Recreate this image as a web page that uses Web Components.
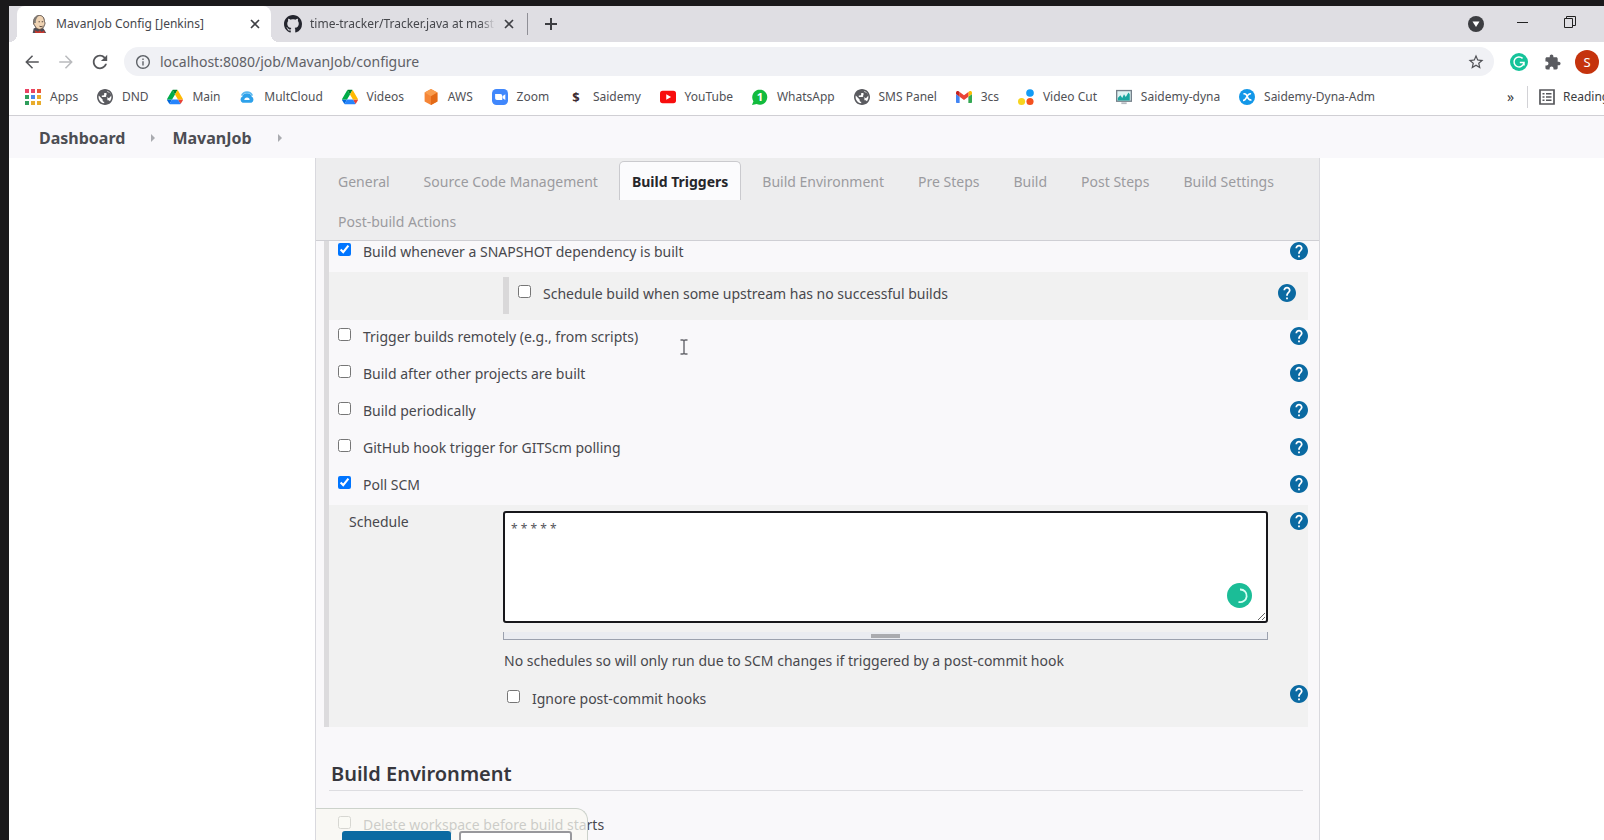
<!DOCTYPE html>
<html lang="en">
<head>
<meta charset="utf-8">
<title>MavanJob Config [Jenkins]</title>
<style>
  html, body { height: 100%; margin: 0; overflow: hidden; }
  body {
    box-sizing: border-box;
    padding: 6px 0 0 9px;
    background: #1a191b;
    font-family: "Noto Sans", "Open Sans", sans-serif;
    font-size: 14px;
    line-height: 20px;
    color: #48484d;
  }
</style>
</head>
<body>
<browser-window>
  <browser-tab slot="tab" icon="jenkins" active>MavanJob Config [Jenkins]</browser-tab>
  <browser-tab slot="tab" icon="github">time-tracker/Tracker.java at master</browser-tab>

  <book-mark slot="bookmark" icon="apps">Apps</book-mark>
  <book-mark slot="bookmark" icon="globe">DND</book-mark>
  <book-mark slot="bookmark" icon="drive">Main</book-mark>
  <book-mark slot="bookmark" icon="cloud">MultCloud</book-mark>
  <book-mark slot="bookmark" icon="drive">Videos</book-mark>
  <book-mark slot="bookmark" icon="aws">AWS</book-mark>
  <book-mark slot="bookmark" icon="zoom">Zoom</book-mark>
  <book-mark slot="bookmark" icon="dollar">Saidemy</book-mark>
  <book-mark slot="bookmark" icon="youtube">YouTube</book-mark>
  <book-mark slot="bookmark" icon="whatsapp">WhatsApp</book-mark>
  <book-mark slot="bookmark" icon="globe">SMS Panel</book-mark>
  <book-mark slot="bookmark" icon="gmail">3cs</book-mark>
  <book-mark slot="bookmark" icon="dots">Video Cut</book-mark>
  <book-mark slot="bookmark" icon="monitor">Saidemy-dyna</book-mark>
  <book-mark slot="bookmark" icon="joomla">Saidemy-Dyna-Adm</book-mark>

  <bread-crumbs><a href="#dashboard">Dashboard</a><a href="#job">MavanJob</a></bread-crumbs>
  <config-page>
    <config-tabs slot="tabs">
      <a href="#general">General</a>
      <a href="#scm">Source Code Management</a>
      <a href="#triggers" aria-current="true">Build Triggers</a>
      <a href="#environment">Build Environment</a>
      <a href="#pre">Pre Steps</a>
      <a href="#build">Build</a>
      <a href="#post">Post Steps</a>
      <a href="#settings">Build Settings</a>
      <a href="#actions">Post-build Actions</a>
    </config-tabs>
    <option-group>
      <option-row checked under-tabs>Build whenever a SNAPSHOT dependency is built</option-row>
      <nested-option><option-row>Schedule build when some upstream has no successful builds</option-row></nested-option>
      <option-row>Trigger builds remotely (e.g., from scripts)</option-row>
      <option-row>Build after other projects are built</option-row>
      <option-row>Build periodically</option-row>
      <option-row>GitHub hook trigger for GITScm polling</option-row>
      <option-row checked>Poll SCM</option-row>
      <schedule-panel value="* * * * *">
        <span slot="status">No schedules so will only run due to SCM changes if triggered by a post-commit hook</span>
        <option-row slot="extra" compact>Ignore post-commit hooks</option-row>
      </schedule-panel>
    </option-group>
    <config-section heading="Build Environment">
      <option-row no-help>Delete workspace before build starts</option-row>
    </config-section>
    <save-bar slot="footer"></save-bar>
  </config-page>
</browser-window>

<script>
const svg = (box, body) => `<svg viewBox="${box}" aria-hidden="true">${body}</svg>`;
const dotGrid = ['#ea4364', '#ea4364', '#e8553c', '#2f9e5b', '#4a86e8', '#e9ac2c', '#2f9e5b', '#e9ac2c', '#e9ac2c']
  .map((c, i) => `<rect x="${(i % 3) * 6}" y="${Math.floor(i / 3) * 6}" width="4" height="4" fill="${c}"/>`).join('');

const ICONS = {
  back: svg('0 0 24 24', '<path fill="#55565a" d="M21 11H6.83l6.59-6.59L12 3l-9 9 9 9 1.41-1.41L6.83 13H21z"/>'),
  forward: svg('0 0 24 24', '<path fill="#b9babd" d="M3 11h14.17l-6.59-6.59L12 3l9 9-9 9-1.41-1.41L17.17 13H3z"/>'),
  reload: svg('2 2 20 20', '<path fill="#55565a" d="M17.65 6.35C16.2 4.9 14.21 4 12 4c-4.42 0-7.99 3.58-7.99 8s3.57 8 7.99 8c3.73 0 6.84-2.55 7.73-6h-2.08c-.82 2.33-3.04 4-5.65 4-3.31 0-6-2.69-6-6s2.69-6 6-6c1.66 0 3.14.69 4.22 1.78L13 11h7V4l-2.35 2.35z"/>'),
  info: svg('2 2 20 20', '<path fill="#5f6368" d="M11 7h2v2h-2zm0 4h2v6h-2zm1-9C6.48 2 2 6.48 2 12s4.48 10 10 10 10-4.48 10-10S17.52 2 12 2zm0 18c-4.41 0-8-3.59-8-8s3.59-8 8-8 8 3.59 8 8-3.59 8-8 8z"/>'),
  star: svg('0 0 24 24', '<path fill="#4f5055" d="M22 9.24l-7.19-.62L12 2 9.19 8.63 2 9.24l5.46 4.73L5.82 21 12 17.27 18.18 21l-1.63-7.03L22 9.24zM12 15.4l-3.76 2.27 1-4.28-3.32-2.88 4.38-.38L12 6.1l1.71 4.04 4.38.38-3.32 2.88 1 4.28L12 15.4z"/>'),
  puzzle: svg('0 -1 25 25', '<path fill="#5a5b60" d="M20.5 11H19V7c0-1.1-.9-2-2-2h-4V3.5C13 2.12 11.88 1 10.5 1S8 2.12 8 3.5V5H4c-1.1 0-1.99.9-1.99 2v3.8H3.5c1.49 0 2.7 1.21 2.7 2.7s-1.21 2.7-2.7 2.7H2V20c0 1.1.9 2 2 2h3.8v-1.5c0-1.49 1.21-2.7 2.7-2.7 1.49 0 2.7 1.21 2.7 2.7V22H17c1.1 0 2-.9 2-2v-4h1.5c1.38 0 2.5-1.12 2.5-2.5S21.88 11 20.5 11z"/>'),
  grammarly: svg('0 0 18 18', '<circle cx="9" cy="9" r="9" fill="#15c39a"/><path d="M12.6 5.4A5 5 0 1 0 14 9.6H9.8M14 9.6v3" fill="none" stroke="#fff" stroke-width="1.5"/>'),
  caret: svg('0 0 16 16', '<circle cx="8" cy="8" r="8" fill="#3c3d41"/><path d="M4.5 5.5h7L8 11z" fill="#fff"/>'),
  minimise: svg('0 0 12 12', '<path d="M0 6.5h11" stroke="#222" stroke-width="1"/>'),
  restore: svg('0 0 12 12', '<path d="M.5 2.5h8v9h-8zM2.5 2.500V.5h9v9h-3" fill="none" stroke="#222"/>'),
  close: svg('0 0 10 10', '<path d="M1 1l8 8M9 1l-8 8" stroke="#3f4045" stroke-width="1.600"/>'),
  plus: svg('0 0 14 14', '<path d="M7 1v12M1 7h12" stroke="#3c3d41" stroke-width="2"/>'),
  jenkins: svg('0 0 16 20', '<path d="M1 20l1-5 5-2 6 2 3 5z" fill="#4b4c55"/><path d="M3 17l4 1.500 2-1.500 2 2 3-2v3H4z" fill="#c8372d"/><path d="M2 8c0-5 3-7.500 6.500-7.500S14 3 14 7.500c1 1 .7 3 0 3.500-.5 3-3 5-5.500 5S4 14 3.500 12C2 11 2 9 2 8z" fill="#efd3b3" stroke="#4a3c35" stroke-width="1"/><path d="M2 9C1 4 4 1 8 .8 5 3 4 6 4.500 9z" fill="#7f7a74"/><path d="M7.500 7.500h1.500M11 7.500h1.500M8.500 12.500q2 1 3.500 0" stroke="#4a3c35" fill="none"/>'),
  github: svg('0 0 16 16', '<path fill="#24252e" d="M8 0C3.58 0 0 3.58 0 8c0 3.54 2.29 6.53 5.47 7.59.4.07.55-.17.55-.38 0-.19-.01-.82-.01-1.49-2.01.37-2.53-.49-2.69-.94-.09-.23-.48-.94-.82-1.13-.28-.15-.68-.52-.01-.53.63-.01 1.08.58 1.23.82.72 1.21 1.87.87 2.33.66.07-.52.28-.87.51-1.07-1.78-.2-3.64-.89-3.64-3.95 0-.87.31-1.59.82-2.15-.08-.2-.36-1.02.08-2.12 0 0 .67-.21 2.2.82.64-.18 1.32-.27 2-.27s1.36.09 2 .27c1.53-1.04 2.2-.82 2.2-.82.44 1.1.16 1.92.08 2.12.51.56.82 1.27.82 2.15 0 3.07-1.87 3.75-3.65 3.95.29.25.54.73.54 1.48 0 1.07-.01 1.93-.01 2.2 0 .21.15.46.55.38A8.01 8.01 0 0 0 16 8c0-4.42-3.58-8-8-8z"/>'),
  apps: svg('0 0 16 16', dotGrid),
  globe: svg('2 2 20 20', '<circle cx="12" cy="12" r="9" fill="#fff"/><path fill="#5a5b60" d="M12 2C6.48 2 2 6.48 2 12s4.48 10 10 10 10-4.480 10-10S17.520 2 12 2zm-1 17.930c-3.950-.490-7-3.850-7-7.930 0-.620.080-1.210.210-1.790L9 15v1c0 1.100.900 2 2 2v1.930zm6.900-2.540c-.260-.810-1-1.390-1.900-1.390h-1v-3c0-.550-.450-1-1-1H8v-2h2c.550 0 1-.450 1-1V7h2c1.100 0 2-.900 2-2v-.410c2.930 1.190 5 4.060 5 7.410 0 2.080-.800 3.970-2.100 5.390z"/><path d="M13.500 5l5 2 1.500 3-3 3.500-4-2 1-2.500z" fill="#5a5b60"/>'),
  drive: svg('0 0 87.300 78', '<path d="m6.600 66.850 3.850 6.650c.8 1.400 1.950 2.500 3.300 3.300l13.750-23.800h-27.500c0 1.550.4 3.100 1.200 4.500z" fill="#0066da"/><path d="m43.650 25-13.750-23.800c-1.350.8-2.500 1.900-3.300 3.300l-25.400 44a9.060 9.060 0 0 0-1.200 4.500h27.500z" fill="#00ac47"/><path d="m73.550 76.800c1.350-.8 2.500-1.900 3.300-3.300l1.600-2.750 7.650-13.250c.8-1.400 1.200-2.950 1.200-4.500h-27.500l5.850 11.500z" fill="#ea4335"/><path d="m43.650 25 13.750-23.800c-1.350-.8-2.900-1.200-4.500-1.200h-18.500c-1.600 0-3.150.45-4.500 1.200z" fill="#00832d"/><path d="m59.800 53h-32.300l-13.750 23.800c1.350.8 2.900 1.200 4.500 1.200h50.800c1.600 0 3.150-.45 4.500-1.200z" fill="#2684fc"/><path d="m73.400 26.500-12.700-22c-.8-1.400-1.950-2.500-3.300-3.300l-13.750 23.800 16.150 28h27.450c0-1.550-.4-3.100-1.200-4.500z" fill="#ffba00"/>'),
  cloud: svg('0 0 18 15', '<path d="M3 6a6.500 6.500 0 0 1 12 0" fill="none" stroke="#5bb8ef" stroke-width="1.800"/><path d="M4 14A3.900 3.900 0 0 1 3.800 7 5.500 5.500 0 0 1 14.200 7 3.900 3.900 0 0 1 14 14z" fill="#2ea1ea"/><path d="M6 11a3 3 0 0 1 6 0z" fill="#fff"/>'),
  aws: svg('0 0 18 20', '<path d="M9 0l8 4.500v11L9 20l-8-4.500v-11z" fill="#f58536"/><path d="M9 0l8 4.500L9 9 1 4.500z" fill="#f99d4f"/><path d="M9 9l8-4.500v11L9 20z" fill="#e36a17"/>'),
  zoom: svg('0 0 18 18', '<rect width="18" height="18" rx="5" fill="#4087fc"/><path d="M3.500 5.500h6a2 2 0 0 1 2 2v5h-6a2 2 0 0 1-2-2zM12 8l3-2v6.500L12 10.500z" fill="#fff"/>'),
  dollar: svg('0 0 16 16', '<text x="8" y="13" text-anchor="middle" font-size="13" font-weight="700" fill="#3b2b31" font-family="Noto Sans">$</text>'),
  youtube: svg('0 0 18 14', '<rect width="18" height="14" rx="3" fill="#f80d0d"/><path d="M7 4l5.500 3L7 10z" fill="#fff"/>'),
  whatsapp: svg('1 0 17 17', '<path d="M1 17l1.500-4A8 8 0 1 1 6 16z" fill="#12bb3d"/><text x="9.500" y="13" text-anchor="middle" font-size="12" font-weight="700" fill="#fff" font-family="Noto Sans">1</text>'),
  gmail: svg('52 42 88 66', '<path fill="#4285f4" d="M58 108h14V74L52 59v43c0 3.320 2.690 6 6 6"/><path fill="#34a853" d="M120 108h14c3.320 0 6-2.690 6-6V59l-20 15"/><path fill="#fbbc04" d="M120 48v26l20-15v-8c0-7.420-8.470-11.650-14.400-7.200"/><path fill="#ea4335" d="M72 74V48l24 18 24-18v26L96 92"/><path fill="#c5221f" d="M52 51v8l20 15V48l-5.600-4.200c-5.940-4.450-14.400-.22-14.400 7.200"/>'),
  dots: svg('0 0 18 18', '<circle cx="13.500" cy="4.500" r="4.300" fill="#129bf5"/><circle cx="4" cy="14" r="4" fill="#f7d41e"/><circle cx="13.500" cy="14" r="4" fill="#f4511e"/>'),
  monitor: svg('0 0 18 16', '<rect x=".75" y=".75" width="16.500" height="12" fill="#dff3f3" stroke="#75808a" stroke-width="1.500"/><path d="M2 12V9l3-3 2 3 2-4 2 3 3-5 1.500 2v7z" fill="#1aa6a0"/><path d="M6 15h6" stroke="#b5bac0" stroke-width="2"/>'),
  joomla: svg('0 0 18 18', '<circle cx="9" cy="9" r="9" fill="#1297e8"/><path d="M5 5.500c3-1 3.500 1 4.500 3.500s2 4 4.500 3M4.500 13c2 0 3-1.500 4-3.500s2.500-5 5-4" fill="none" stroke="#fff" stroke-width="1.800"/>'),
  reading: svg('0 0 16 16', '<path d="M1 1h14v14H1z" fill="none" stroke="#55565a" stroke-width="1.700"/><path d="M3.500 4.800h2M3.500 8h2M3.500 11.200h2M7 4.800h5.500M7 8h5.500M7 11.200h5.500" stroke="#55565a" stroke-width="1.400"/>'),
  help: svg('2 2 20 20', '<circle cx="12" cy="12" r="8" fill="#fff"/><path fill="#0b6aa2" d="M12 2C6.480 2 2 6.480 2 12s4.480 10 10 10 10-4.480 10-10S17.520 2 12 2zm1 17h-2v-2h2v2zm2.070-7.750l-.9.920C13.450 12.900 13 13.500 13 15h-2v-.5c0-1.100.45-2.100 1.170-2.830l1.240-1.260c.37-.36.590-.86.590-1.410 0-1.100-.9-2-2-2s-2 .9-2 2H8c0-2.210 1.790-4 4-4s4 1.790 4 4c0 .88-.36 1.680-.93 2.250z"/>'),
  spinner: svg('0 0 25 25', '<circle cx="12.500" cy="12.500" r="12.500" fill="#1bbd97"/><path d="M13 6.500a6.300 6.300 0 1 1-1.500 12.300" fill="none" stroke="#d8fff4" stroke-width="1.800"/>'),
  ibeam: svg('0 0 8 16', '<path d="M.5 1h2.500l1 1 1-1h2.500M.5 15h2.500l1-1 1 1h2.500M4 2v12" fill="none" stroke="#66666c" stroke-width="1.400"/>')
};

function define(name, css, html, setup) {
  const template = document.createElement('template');
  template.innerHTML = `<style>*,:host{box-sizing:border-box} ${css}</style>${html}`;
  customElements.define(name, class extends HTMLElement {
    connectedCallback() {
      if (this.shadowRoot) return;
      this.attachShadow({ mode: 'open' }).append(template.content.cloneNode(true));
      if (setup) setup(this, this.shadowRoot);
    }
  });
}

const icon = name => {
  const el = document.createElement('ui-icon');
  el.setAttribute('name', name);
  return el;
};

define('ui-icon',
  ':host{display:block;flex:none;width:18px;height:18px} div,svg{display:block;width:100%;height:100%}', '<div></div>',
  (host, root) => root.querySelector('div').innerHTML = ICONS[host.getAttribute('name')]);

define('browser-tab', `
  :host{display:flex;align-items:center;position:relative;width:254px;height:36px;padding:0 10px 0 13px;gap:8px;
    font-size:12px;color:#46474c;border-radius:8px 8px 0 0}
  :host([active]){background:#fff}
  :host([active])::before,:host([active])::after{content:"";position:absolute;bottom:0;width:8px;height:8px}
  :host([active])::before{right:100%;background:radial-gradient(circle at 0 0,transparent 8px,#fff 8px)}
  :host([active])::after{left:100%;background:radial-gradient(circle at 100% 0,transparent 8px,#fff 8px)}
  span{flex:1;min-width:0;overflow:hidden;white-space:nowrap}
  :host(:not([active])) span{-webkit-mask-image:linear-gradient(90deg,#000 92%,transparent)}
  button{display:grid;place-items:center;width:12px;height:18px;padding:0;border:0;background:none}
  button ui-icon{width:10px;height:10px}`,
  '<span><slot></slot></span><button aria-label="Close tab"><ui-icon name="close"></ui-icon></button>',
  (host, root) => root.querySelector('span').before(icon(host.getAttribute('icon'))));

define('book-mark', `
  :host{display:block;flex:none}
  a{display:flex;align-items:center;gap:9px;color:#505156;font-size:12px;text-decoration:none;white-space:nowrap}
  ui-icon{width:16px;height:16px}`,
  '<a href="#"><slot></slot></a>',
  (host, root) => root.querySelector('a').prepend(icon(host.getAttribute('icon'))));

define('browser-window', `
  :host{display:flex;flex-direction:column;height:100%;background:#fff;overflow:hidden;position:relative}
  button{display:grid;place-items:center;padding:0;border:0;background:none;font:inherit;flex:none}
  .strip{display:flex;flex:none;height:36px;padding:0 11px 0 8px;background:#dfdee3}
  .strip .new{width:46px}
  .divider{align-self:center;width:1px;height:22px;margin-left:2px;background:#8f8f96}
  .space{flex:1}
  .strip .win{width:47px;padding-bottom:5px}
  .win ui-icon{width:12px;height:12px}
  .strip .menu{padding-bottom:0}
  .menu ui-icon{width:16px;height:16px}
  .new ui-icon{width:14px;height:14px}
  .bar{display:flex;flex:none;align-items:center;height:36px;padding:5px 0 2px 6px}
  .bar button{width:34px;height:29px}
  .bar .nav ui-icon{width:18px;height:18px}
  .omni{display:flex;flex:1;align-items:center;gap:10px;height:29px;margin:0 8px 0 7px;padding:0 1px 0 12px;border-radius:15px;background:#f0f1f5}
  .omni .info{width:14px;height:14px}
  input{flex:1;min-width:0;padding:0;border:0;background:none;font:inherit;color:#606167;outline:0}
  .avatar{display:grid;place-items:center;width:24px;height:24px;border-radius:50%;background:#c5330d;color:#fff;font-size:13px}
  .marks{display:flex;flex:none;align-items:center;height:38px;padding-left:16px;border-bottom:1px solid #d0cfd4;background:#fff;overflow:hidden}
  .list{display:flex;flex:1;justify-content:space-between;max-width:1350px}
  .more{display:flex;align-items:center;margin-left:auto;flex:none;width:97px;color:#3b3c40;font-size:12px}
  .more>*{flex:none}
  .chev{width:10px;font-size:14px;line-height:18px}
  .more i{width:1px;height:22px;margin:0 11px 0 10px;background:#d2d2d6}
  .more a{display:flex;align-items:center;gap:8px;color:inherit;text-decoration:none;white-space:nowrap}
  .more a ui-icon{width:16px;height:16px}
  .cursor{position:absolute;left:671px;top:333px;width:8px;height:16px}`,
  `<div class="strip"><slot name="tab"></slot><span class="divider"></span>
     <button class="new" aria-label="New tab"><ui-icon name="plus"></ui-icon></button><span class="space"></span>
     <button class="win menu" aria-label="Search tabs"><ui-icon name="caret"></ui-icon></button>
     <button class="win" aria-label="Minimise"><ui-icon name="minimise"></ui-icon></button>
     <button class="win" aria-label="Restore"><ui-icon name="restore"></ui-icon></button></div>
   <div class="bar">
     <button class="nav" aria-label="Back"><ui-icon name="back"></ui-icon></button>
     <button class="nav" aria-label="Forward"><ui-icon name="forward"></ui-icon></button>
     <button class="nav" aria-label="Reload"><ui-icon name="reload"></ui-icon></button>
     <div class="omni"><ui-icon class="info" name="info"></ui-icon>
       <input aria-label="Address" value="localhost:8080/job/MavanJob/configure">
       <button aria-label="Bookmark this page"><ui-icon name="star"></ui-icon></button></div>
     <button aria-label="Grammarly"><ui-icon name="grammarly"></ui-icon></button>
     <button aria-label="Extensions"><ui-icon name="puzzle"></ui-icon></button>
     <button aria-label="Profile"><span class="avatar">S</span></button></div>
   <nav class="marks" aria-label="Bookmarks"><div class="list"><slot name="bookmark"></slot></div>
     <div class="more"><span class="chev">»</span><i></i><a href="#reading"><ui-icon name="reading"></ui-icon>Reading</a></div></nav>
   <slot></slot><ui-icon class="cursor" name="ibeam"></ui-icon>`);

define('bread-crumbs', `
  :host{display:flex;flex:none;align-items:center;height:42px;padding:2px 30px 0;background:#f9f8fb;font-size:16px;font-weight:700;line-height:24px}
  ::slotted(a){color:#4c4d53;text-decoration:none}
  nav{display:flex;align-items:center}
  i{width:0;height:0;margin:0 17px 0 26px;border:4px solid transparent;border-left-color:#aaabb0;border-right:0}`,
  '<nav aria-label="Breadcrumb"></nav>',
  (host, root) => {
    const nav = root.querySelector('nav');
    [...host.children].forEach((link, n) => {
      link.slot = 'c' + n;
      nav.insertAdjacentHTML('beforeend', `<slot name="c${n}"></slot><i></i>`);
    });
  });

define('config-page', `
  :host{display:grid;flex:1;min-height:0;grid-template-columns:306px minmax(0,1fr) 284px;background:#fff}
  main{grid-column:2;position:relative;min-height:0;overflow:hidden;border:solid #d9d9de;border-width:0 1px;background:#f9f8fa}`,
  '<main><slot name="tabs"></slot><slot></slot><slot name="footer"></slot></main>');

define('config-tabs', `
  :host{display:flex;flex-wrap:wrap;align-content:flex-start;row-gap:1px;height:83px;padding:3px 4px 0 5px;border-bottom:1px solid #cfcfd4;background:#ededee}
  ::slotted(a){height:39px;margin:0 4px;padding:10px 12px 8px;border:1px solid transparent;border-bottom:0;color:#9b9b9f;text-decoration:none;box-sizing:border-box}
  ::slotted(a[aria-current]){border-color:#cacace;border-radius:5px 5px 0 0;background:#fbfbfd;color:#26262b;font-weight:700}`,
  '<slot></slot>');

define('option-group', ':host{display:block;margin:0 11px 0 8px;border-left:5px solid #dcdbdd}', '<slot></slot>');

define('option-row', `
  :host{display:flex;justify-content:space-between;height:37px;padding-left:9px}
  :host([under-tabs]){height:31px}
  label{display:flex;align-items:flex-start;gap:12px;padding-top:7px}
  :host([under-tabs]) label{padding-top:1px}
  :host([under-tabs]) button{margin-top:1px}
  :host([compact]){padding-left:4px}
  :host([compact]) label{padding-top:11px}
  input{width:13px;height:13px;margin:1px 0 0;flex:none}
  button{width:18px;height:18px;margin:7px 0 0;padding:0;border:0;background:none}
  :host([no-help]) button{display:none}`,
  '<label><input type="checkbox"><slot></slot></label><button aria-label="Help"><ui-icon name="help"></ui-icon></button>',
  (host, root) => root.querySelector('input').checked = host.hasAttribute('checked'));

define('nested-option', `
  :host{display:block;height:48px;padding:5px 12px 5px 174px;background:#f1f1f1}
  div{border-left:6px solid #d9d8d9}`,
  '<div><slot></slot></div>');

define('schedule-panel', `
  :host{display:grid;grid-template-columns:174px minmax(0,1fr) 40px;padding-bottom:12px;background:#f1f1f1}
  .name{padding:7px 0 0 20px}
  .box{position:relative;height:112px;margin-top:6px}
  textarea{display:block;width:100%;height:112px;padding:6px;border:2px solid #17171b;border-radius:3px;background:#fff;
    color:#55555b;font:12px/20px "Noto Sans",sans-serif;resize:vertical;outline:0}
  .box ui-icon{position:absolute;right:16px;bottom:15px;width:25px;height:25px}
  .grip{display:grid;place-items:center;height:8px;margin:9px 0 11px;border:solid #9ba1ae;border-width:0 1px 1px;background:#eaecf1}
  .grip i{width:29px;height:4px;background:#aaabaf}
  .status{height:27px;padding-left:1px}
  button{justify-self:end;width:18px;height:18px;margin:7px 0 0;padding:0;border:0;background:none}
  ::slotted(option-row){grid-column:2/4}`,
  `<label class="name" for="spec">Schedule</label>
   <div><div class="box"><textarea id="spec"></textarea><ui-icon name="spinner"></ui-icon></div>
     <div class="grip"><i></i></div><div class="status"><slot name="status"></slot></div></div>
   <button aria-label="Help"><ui-icon name="help"></ui-icon></button>
   <slot name="extra"></slot>`,
  (host, root) => root.querySelector('textarea').value = host.getAttribute('value'));

define('config-section', `
  :host{display:block;margin:33px 16px 0 13px}
  h2{margin:0 0 17px;padding:0 2px 2px;border-bottom:1px solid #dddde1;font-size:20px;font-weight:600;line-height:28px;color:#37373d}`,
  '<h2></h2><slot></slot>',
  (host, root) => root.querySelector('h2').textContent = host.getAttribute('heading'));

define('save-bar', `
  :host{position:absolute;left:0;bottom:0;display:flex;align-items:flex-start;gap:8px;width:272px;height:32px;padding:22px 15px 0 26px;overflow:hidden;
    border:solid #ccd2cb;border-width:1px 1px 0 0;border-radius:0 12px 0 0;background:rgba(248,248,242,.75)}
  button{flex:1;height:30px;border:0;border-radius:3px;background:#0b6aa2}
  button+button{border:2px solid #98989c;background:#fff}`,
  '<button aria-label="Save"></button><button aria-label="Apply"></button>');
</script>
</body>
</html>
